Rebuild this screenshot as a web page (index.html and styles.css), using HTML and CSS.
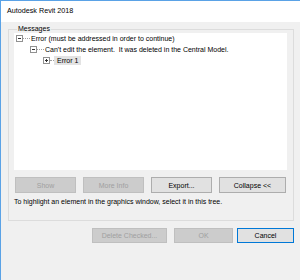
FILE: index.html
```html
<!DOCTYPE html>
<html lang="en">

<head>
	<meta charset="UTF-8">
	<meta name="viewport" content="width=device-width, initial-scale=1.0">
	<title>Autodesk Revit 2018</title>
	<link rel="stylesheet" href="styles.css">
</head>

<body>
	<div class="window">
		<div class="titlebar">Autodesk Revit 2018</div>
		<div class="content">
			<fieldset class="group">
				<legend>Messages</legend>
				<div class="tree">
					<div class="node">
						<span class="toggle minus"></span>
						<span class="dots"></span>
						<span class="label">Error (must be addressed in order to continue)</span>
					</div>
					<div class="node level2">
						<span class="toggle minus"></span>
						<span class="dots"></span>
						<span class="label">Can't edit the element.&nbsp; It was deleted in the Central Model.</span>
					</div>
					<div class="node level3">
						<span class="toggle plus"></span>
						<span class="dots short"></span>
						<span class="label selected">Error 1</span>
					</div>
				</div>
				<div class="btn-row">
					<button class="btn" disabled>Show</button>
					<button class="btn" disabled>More Info</button>
					<button class="btn">Export...</button>
					<button class="btn wide">Collapse &lt;&lt;</button>
				</div>
				<p class="hint">To highlight an element in the graphics window, select it in this tree.</p>
			</fieldset>
			<div class="footer">
				<button class="btn delete" disabled>Delete Checked...</button>
				<button class="btn ok" disabled>OK</button>
				<button class="btn cancel">Cancel</button>
			</div>
		</div>
	</div>
</body>

</html>
```

FILE: styles.css
```css
* {
	margin: 0;
	padding: 0;
	box-sizing: border-box;
}

html,
body {
	width: 100%;
	height: 100%;
}

body {
	font-family: "Liberation Sans", Arial, sans-serif;
	font-size: 7px;
	color: #000;
	background: #f0f0f0;
}

.window {
	height: 100%;
	border-top: 1px solid #5aa2e6;
	border-left: 1px solid #5aa2e6;
	background: #f0f0f0;
}

.titlebar {
	height: 21px;
	padding-left: 6px;
	background: #fff;
	font-size: 7.2px;
	line-height: 19px;
}

.content {
	padding: 3px 6px 0 7px;
}

.group {
	border: 1px solid #dcdcdc;
	padding: 1px 6px 14px 5px;
}

.group legend {
	margin-left: 3px;
	padding: 0 1px;
	line-height: 8px;
}

.tree {
	height: 137px;
	background: #fff;
}

.node {
	display: flex;
	align-items: center;
	height: 11px;
	padding-left: 2px;
}

.node:first-child {
	margin-top: -1px;
}

.level2 {
	padding-left: 16px;
}

.level3 {
	padding-left: 29px;
}

.toggle {
	position: relative;
	width: 7px;
	height: 7px;
	border: 1px solid #919191;
	background: #fff;
}

.toggle::before {
	content: "";
	position: absolute;
	left: 1px;
	top: 2px;
	width: 3px;
	height: 1px;
	background: #333;
}

.plus::after {
	content: "";
	position: absolute;
	left: 2px;
	top: 1px;
	width: 1px;
	height: 3px;
	background: #333;
}

.dots {
	width: 7px;
	margin-right: 1px;
	border-top: 1px dotted #a0a0a0;
}

.dots.short {
	width: 4px;
	margin-right: 0;
}

.label {
	white-space: nowrap;
	line-height: 9px;
}

.selected {
	padding: 0 3px;
	background: #e3e3e3;
}

.btn-row {
	display: flex;
	gap: 7px;
	margin-top: 7px;
	padding-left: 1px;
}

.btn {
	width: 61px;
	height: 16px;
	font-family: inherit;
	font-size: 7px;
	color: #000;
	background: #e1e1e1;
	border: 1px solid #adadad;
}

.btn:disabled {
	color: #a0a0a0;
	background: #cccccc;
	border-color: #bfbfbf;
}

.btn.wide {
	width: 67px;
}

.hint {
	margin-top: 4px;
	line-height: 9px;
}

.footer {
	display: flex;
	justify-content: flex-end;
	gap: 7px;
	margin-top: 7px;
}

.footer .btn {
	height: 15px;
}

.btn.delete {
	width: 75px;
}

.btn.ok {
	width: 59px;
}

.btn.cancel {
	width: 57px;
	margin-left: -3px;
	border-color: #0078d7;
}
```
